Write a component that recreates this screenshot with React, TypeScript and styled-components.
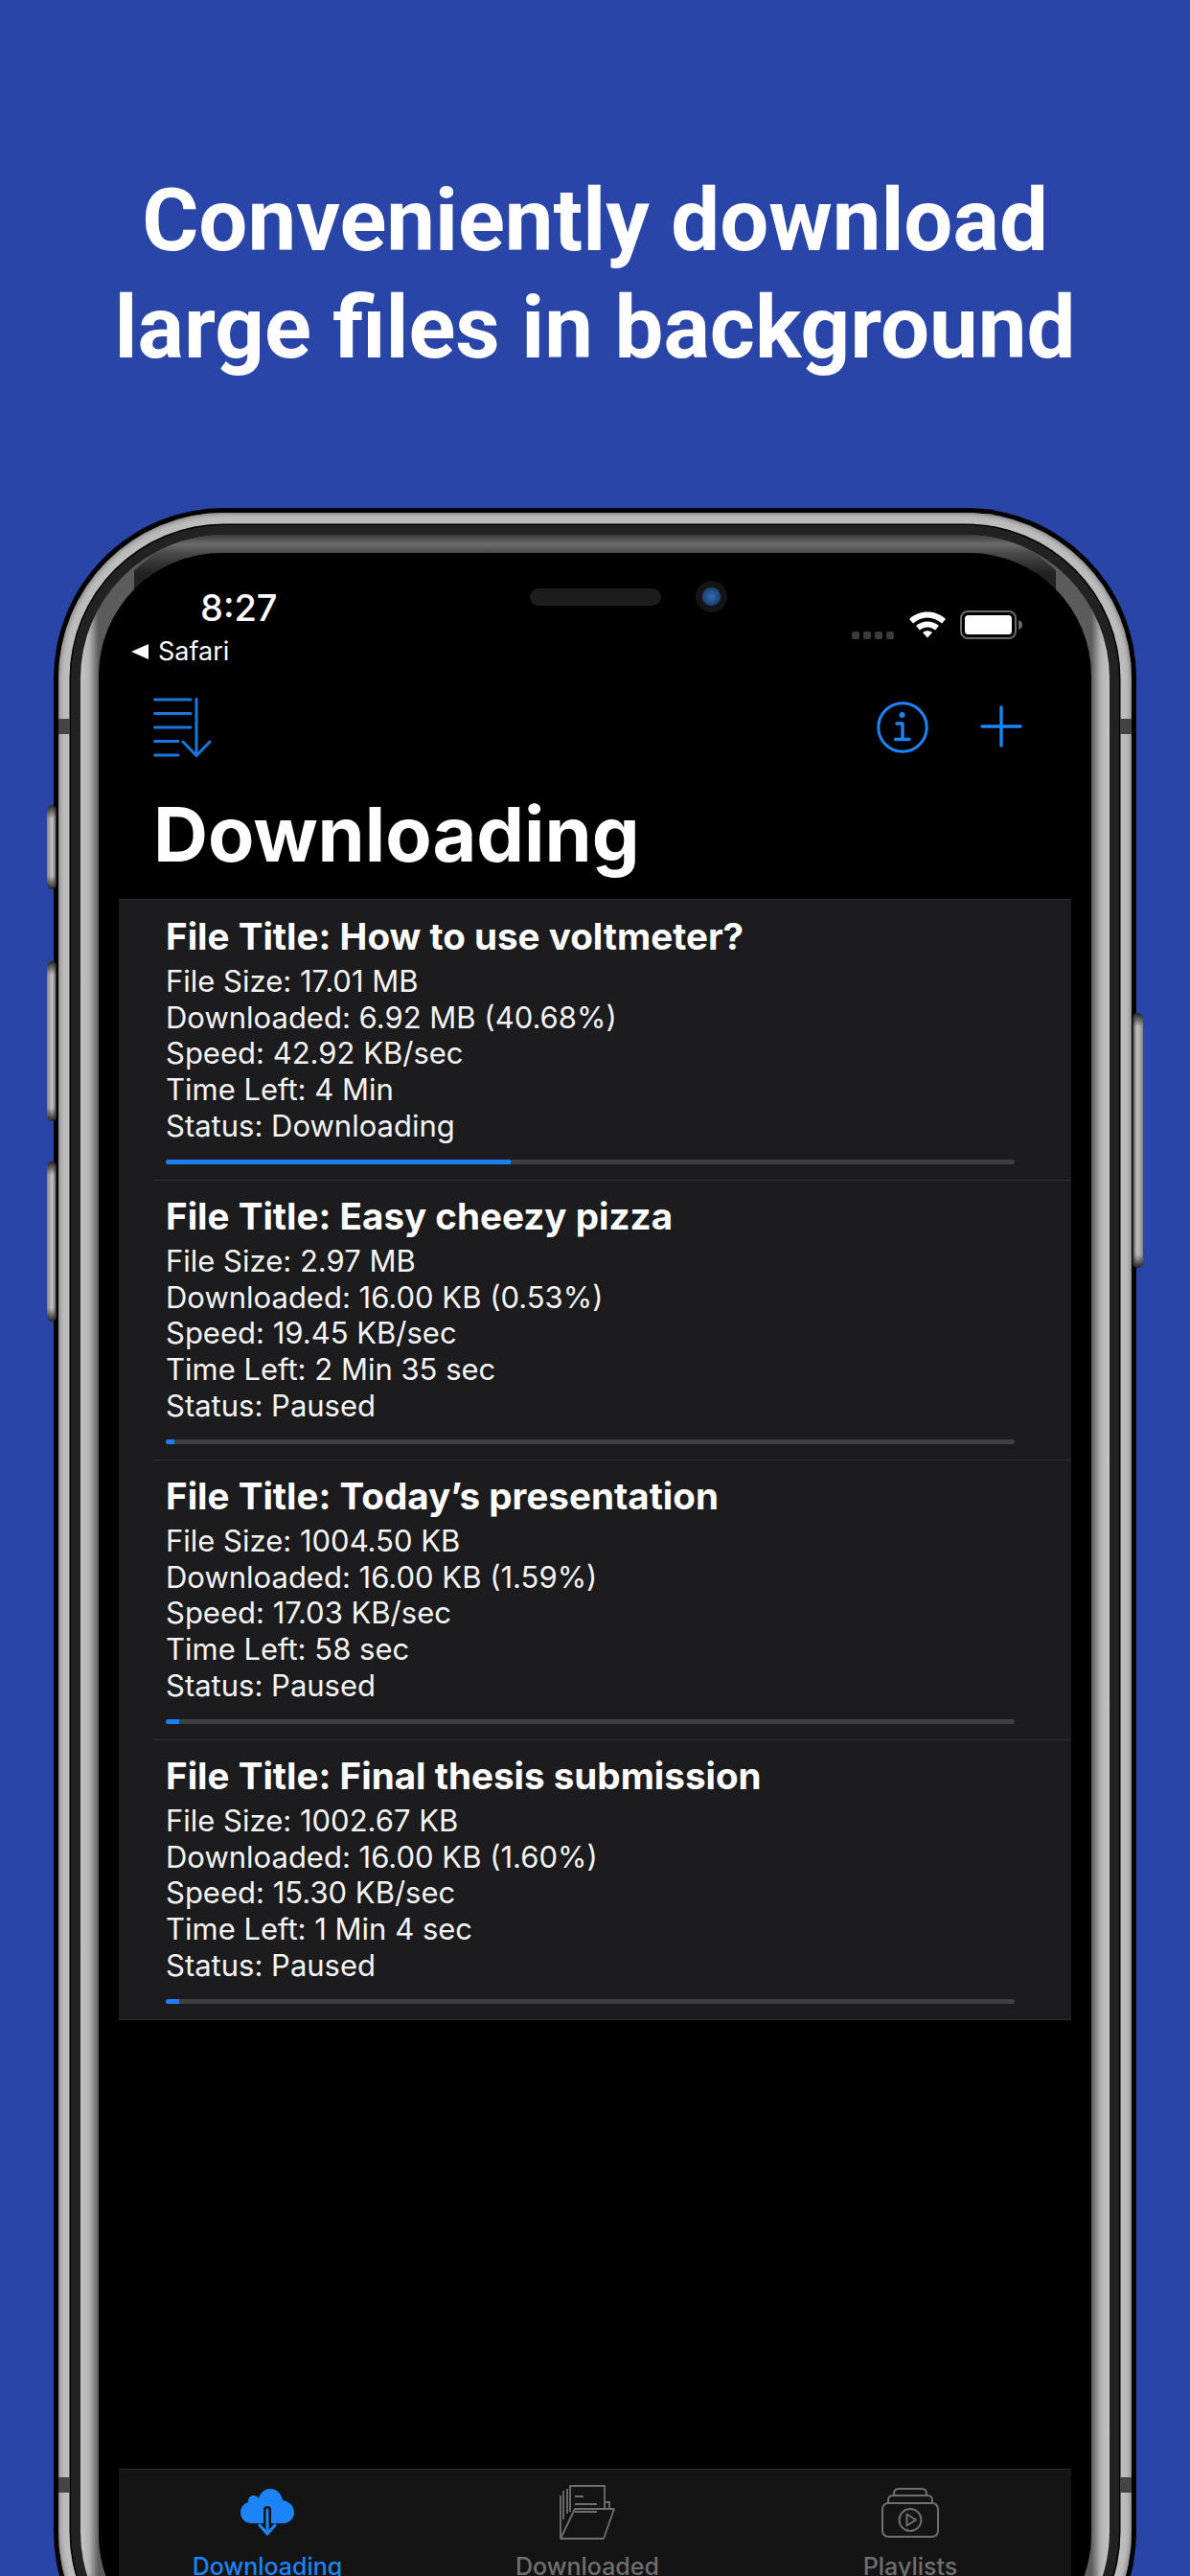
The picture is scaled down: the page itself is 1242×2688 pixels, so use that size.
import React from "react"
import styled, { createGlobalStyle } from "styled-components"

const GlobalStyle = createGlobalStyle`
  html, body {
    margin: 0;
    padding: 0;
    background: #2a45a8;
  }
  * {
    box-sizing: border-box;
  }
`

const Page = styled.div`
  width: 1242px;
  height: 2688px;
  overflow: hidden;
  background: #2a45a8;
  display: flex;
  flex-direction: column;
  align-items: center;
`

const Headline = styled.h1`
  flex: none;
  margin: 0;
  padding-top: 174px;
  height: 530px;
  color: #fff;
  font-family: "Roboto", "Liberation Sans", sans-serif;
  font-size: 90.5px;
  font-weight: 700;
  line-height: 112px;
  text-align: center;
`

const Phone = styled.div`
  position: relative;
  flex: none;
  width: 1130px;
  height: 2290px;
  padding: 5px;
  border-radius: 178px;
  background: #000;
`

const SideButton = styled.div<{ $side: "left" | "right"; $top: number; $height: number; $width: number }>`
  position: absolute;
  ${p => p.$side}: -7px;
  top: ${p => p.$top}px;
  width: ${p => p.$width}px;
  height: ${p => p.$height}px;
  border-radius: 5px;
  background:
    linear-gradient(180deg, #222 0, rgba(34, 34, 34, 0) 14px, rgba(34, 34, 34, 0) calc(100% - 14px), #222 100%),
    linear-gradient(
      ${p => (p.$side === "left" ? "90deg" : "270deg")},
      #888,
      #c4c4c4 55%,
      #777 85%,
      #111
    );
`

const Antenna = styled.div<{ $side: "left" | "right"; $top: number }>`
  position: absolute;
  ${p => p.$side}: 5px;
  top: ${p => p.$top}px;
  width: 12px;
  height: 16px;
  background: #444;
`

const SilverRing = styled.div`
  height: 100%;
  padding: 13px;
  border-radius: 173px;
  background: #bcbcbc;
  box-shadow: inset 0 0 5px 1px #777;
`

const DarkRing = styled.div`
  height: 100%;
  padding: 10px;
  border-radius: 160px;
  background: #222;
  box-shadow: 0 0 0 1.5px #000;
`

const Bevel = styled.div`
  position: relative;
  height: 100%;
  padding: 19px;
  border-radius: 150px;
  overflow: hidden;
  background: linear-gradient(
    90deg,
    #c4c4c4 0,
    #b4b4b4 9px,
    #5c5c5c 19px,
    #5c5c5c calc(100% - 19px),
    #b4b4b4 calc(100% - 9px),
    #c4c4c4 100%
  );

  &::before {
    content: "";
    position: absolute;
    top: 0;
    left: 0;
    right: 0;
    height: 60px;
    background: linear-gradient(180deg, #3c3c3c, #6c6c6c 10px, #4a4a4a 19px, #222 40px);
    clip-path: polygon(
      79px 0,
      calc(100% - 79px) 0,
      calc(100% - 79px) 18px,
      calc(100% - 56px) 37px,
      calc(100% - 56px) 60px,
      56px 60px,
      56px 37px,
      79px 18px
    );
  }
`

const Screen = styled.div`
  position: relative;
  height: 100%;
  padding: 0 21px;
  border-radius: 128px;
  background: #000;
  overflow: hidden;
  display: flex;
  flex-direction: column;
  font-family: "Inter", "Liberation Sans", sans-serif;
  color: #fff;
`

const StatusBar = styled.div`
  flex: none;
  height: 130px;
  padding: 36px 50px 0 13px;
  display: flex;
  justify-content: space-between;
`

const StatusLeft = styled.div`
  display: flex;
  flex-direction: column;
  gap: 10px;
`

const Clock = styled.div`
  padding-left: 72px;
  font-size: 38px;
  line-height: 42px;
  font-weight: 500;
`

const BackLink = styled.div`
  display: flex;
  align-items: center;
  gap: 10px;
  font-size: 27px;
  line-height: 30px;
`

const BackArrow = styled.span`
  width: 0;
  height: 0;
  border-top: 8px solid transparent;
  border-bottom: 8px solid transparent;
  border-right: 18px solid #fff;
`

const StatusIcons = styled.div`
  display: flex;
  align-items: flex-end;
  height: 54px;
  padding-top: 25px;
`

const SignalDots = styled.div`
  display: flex;
  gap: 4px;
  margin-right: 15px;
`

const SignalDot = styled.span`
  width: 8px;
  height: 8px;
  border-radius: 2px;
  background: #3b3b3b;
`

const Notch = styled.div`
  position: absolute;
  top: 29px;
  left: 0;
  right: 0;
  display: flex;
  justify-content: center;
  align-items: center;
  gap: 36px;
  padding-left: 70px;
`

const Speaker = styled.div`
  width: 137px;
  height: 18px;
  border-radius: 9px;
  background: #1c1c1c;
`

const Camera = styled.div`
  width: 33px;
  height: 33px;
  border-radius: 50%;
  background: radial-gradient(circle, #2f6cb0 0, #1d4478 38%, #141414 44%, #141414 100%);
`

const NavBar = styled.div`
  flex: none;
  height: 100px;
  padding: 21px 51px 0 36px;
  display: flex;
  justify-content: space-between;
`

const NavActions = styled.div`
  display: flex;
  gap: 54px;
  padding-top: 4px;
`

const LargeTitle = styled.h2`
  flex: none;
  margin: 0;
  height: 131px;
  padding: 15px 0 0 36px;
  font-size: 79px;
  line-height: 96px;
  font-weight: 700;
`

const List = styled.div`
  flex: none;
  background: #1c1c1e;
  border-top: 1px solid #2c2c2e;
  border-bottom: 1px solid #2c2c2e;
`

const Row = styled.div`
  height: 292px;
  padding: 15px 0 0 49px;
  position: relative;

  & + &::before {
    content: "";
    position: absolute;
    top: 0;
    left: 36px;
    right: 0;
    height: 1px;
    background: #2f2f31;
  }
`

const RowTitle = styled.div`
  font-size: 38.6px;
  line-height: 46px;
  font-weight: 700;
  margin-bottom: 5px;
`

const RowLine = styled.div`
  font-size: 31px;
  line-height: 37.7px;
  font-weight: 400;
  color: #f4f4f4;
`

const Track = styled.div`
  width: 886px;
  height: 5px;
  margin-top: 16px;
  border-radius: 3px;
  background: #3f3f41;
  overflow: hidden;
`

const Fill = styled.div`
  height: 100%;
  background: #1c7ef2;
`

const Spacer = styled.div`
  flex: 1;
`

const TabBar = styled.div`
  flex: none;
  height: 197px;
  background: #141414;
  border-top: 1px solid #2c2c2c;
  display: grid;
  grid-template-columns: 310px 358px 316px;
`

const Tab = styled.div<{ $active?: boolean }>`
  padding-top: 16px;
  display: flex;
  flex-direction: column;
  align-items: center;
  color: ${p => (p.$active ? "#1a84f8" : "#6f6f6f")};
`

const TabIcon = styled.div`
  height: 58px;
  display: flex;
  align-items: center;
`

const TabLabel = styled.div`
  margin-top: 12px;
  font-size: 25px;
  line-height: 30px;
  font-weight: 500;
`

function WifiIcon() {
  return (
    <svg width="40" height="30" viewBox="0 0 40 30" style={{ marginRight: 14, marginBottom: 1 }}>
      <path d="M1 10 C11 0 29 0 39 10 L35 14.5 C26 6.5 14 6.5 5 14.5 Z" fill="#fff" />
      <path d="M8 17 C15 11 25 11 32 17 L28 21.5 C23 17.5 17 17.5 12 21.5 Z" fill="#fff" />
      <path d="M15 24 C18 21.5 22 21.5 25 24 L20 29.5 Z" fill="#fff" />
    </svg>
  )
}

function BatteryIcon() {
  return (
    <svg width="66" height="30" viewBox="0 0 66 30">
      <rect x="1" y="1" width="57" height="28" rx="7" fill="none" stroke="#6b6b6b" strokeWidth="2" />
      <rect x="5" y="5" width="49" height="20" rx="3.5" fill="#fff" />
      <path d="M61 10 C64 11 65 13 65 15 C65 17 64 19 61 20 Z" fill="#6b6b6b" />
    </svg>
  )
}

function QueueIcon() {
  return (
    <svg width="62" height="62" viewBox="0 0 62 62" fill="none" stroke="#1a78dc" strokeWidth="3" strokeLinecap="round">
      <path d="M1.5 2H39M1.5 16.5H39M1.5 31H39M1.5 45.5H26M1.5 60H26" />
      <path d="M45 1.5V60.5M31 46L45 60.5L59 46" strokeLinejoin="round" />
    </svg>
  )
}

function InfoIcon() {
  return (
    <svg width="54" height="54" viewBox="0 0 54 54" fill="none" stroke="#1a84f8" strokeWidth="3">
      <circle cx="27" cy="27" r="25.2" />
      <circle cx="26.5" cy="14" r="3" fill="#1a84f8" stroke="none" />
      <path d="M21 23H27V38M19.5 39.5H34" strokeLinecap="round" strokeLinejoin="round" strokeWidth="3.4" />
    </svg>
  )
}

function PlusIcon() {
  return (
    <svg width="44" height="44" viewBox="0 0 44 44" stroke="#1a84f8" strokeWidth="3.4" strokeLinecap="round" style={{ marginTop: 4 }}>
      <path d="M22 2V42M2 22H42" />
    </svg>
  )
}

function CloudIcon() {
  return (
    <svg width="56" height="50" viewBox="0 0 56 50">
      <path
        d="M12 36 C4 36 0 30 0 25 C0 19 4 15 8 14 C8 8 11 7 14 7 C16 7 18 8 19 10 C21 3 26 0 31 0 C38 0 43 5 44 12 C51 13 56 18 56 25 C56 31 51 36 45 36 Z"
        fill="currentColor"
      />
      <path d="M28 40V22" stroke="#141414" strokeWidth="8" strokeLinecap="round" />
      <path d="M28 43V22" stroke="currentColor" strokeWidth="3" strokeLinecap="round" />
      <path d="M20 38L28 47L36 38" fill="none" stroke="currentColor" strokeWidth="3.2" strokeLinecap="round" strokeLinejoin="round" />
    </svg>
  )
}

function FolderIcon() {
  return (
    <svg width="60" height="58" viewBox="0 0 60 58" fill="none" stroke="currentColor" strokeWidth="1.8">
      <path d="M12 28V1H48V24" />
      <path d="M9 4V30M5 6V36M2 11V55" />
      <path d="M17 12H26M17 20H40M17 28H40" strokeWidth="2" />
      <path d="M48 18H53V25" />
      <path d="M2 56H47L58 25H17L2 56Z" strokeLinejoin="round" />
    </svg>
  )
}

function PlaylistIcon() {
  return (
    <svg width="60" height="52" viewBox="0 0 60 52" fill="none" stroke="currentColor" strokeWidth="2">
      <path d="M13 8V6C13 3 15 1 18 1H42C45 1 47 3 47 6V8" />
      <path d="M7 16V13C7 10 9 8 12 8H48C51 8 53 10 53 13V16" />
      <rect x="1" y="16" width="58" height="35" rx="6" />
      <circle cx="30" cy="33.5" r="11.5" />
      <path d="M26.5 27.5L36 33.5L26.5 39.5Z" strokeLinejoin="round" />
    </svg>
  )
}

type Download = {
  title: string
  size: string
  downloaded: string
  speed: string
  timeLeft: string
  status: string
  progress: number
}

const downloads: Download[] = [
  {
    title: "How to use voltmeter?",
    size: "17.01 MB",
    downloaded: "6.92 MB (40.68%)",
    speed: "42.92 KB/sec",
    timeLeft: "4 Min",
    status: "Downloading",
    progress: 40.68,
  },
  {
    title: "Easy cheezy pizza",
    size: "2.97 MB",
    downloaded: "16.00 KB (0.53%)",
    speed: "19.45 KB/sec",
    timeLeft: "2 Min 35 sec",
    status: "Paused",
    progress: 1,
  },
  {
    title: "Today’s presentation",
    size: "1004.50 KB",
    downloaded: "16.00 KB (1.59%)",
    speed: "17.03 KB/sec",
    timeLeft: "58 sec",
    status: "Paused",
    progress: 1.6,
  },
  {
    title: "Final thesis submission",
    size: "1002.67 KB",
    downloaded: "16.00 KB (1.60%)",
    speed: "15.30 KB/sec",
    timeLeft: "1 Min 4 sec",
    status: "Paused",
    progress: 1.6,
  },
]

export default function App() {
  return (
    <Page>
      <GlobalStyle />
      <Headline>
        Conveniently download
        <br />
        large files in background
      </Headline>
      <Phone>
        <SideButton $side="left" $top={310} $height={88} $width={10} />
        <SideButton $side="left" $top={473} $height={167} $width={10} />
        <SideButton $side="left" $top={682} $height={167} $width={10} />
        <SideButton $side="right" $top={527} $height={266} $width={11} />
        <SilverRing>
          <DarkRing>
            <Bevel>
              <Screen>
                <Notch>
                  <Speaker />
                  <Camera />
                </Notch>
                <StatusBar>
                  <StatusLeft>
                    <Clock>8:27</Clock>
                    <BackLink>
                      <BackArrow />
                      Safari
                    </BackLink>
                  </StatusLeft>
                  <StatusIcons>
                    <SignalDots>
                      <SignalDot />
                      <SignalDot />
                      <SignalDot />
                      <SignalDot />
                    </SignalDots>
                    <WifiIcon />
                    <BatteryIcon />
                  </StatusIcons>
                </StatusBar>
                <NavBar>
                  <QueueIcon />
                  <NavActions>
                    <InfoIcon />
                    <PlusIcon />
                  </NavActions>
                </NavBar>
                <LargeTitle>Downloading</LargeTitle>
                <List>
                  {downloads.map(d => (
                    <Row key={d.title}>
                      <RowTitle>File Title: {d.title}</RowTitle>
                      <RowLine>File Size: {d.size}</RowLine>
                      <RowLine>Downloaded: {d.downloaded}</RowLine>
                      <RowLine>Speed: {d.speed}</RowLine>
                      <RowLine>Time Left: {d.timeLeft}</RowLine>
                      <RowLine>Status: {d.status}</RowLine>
                      <Track>
                        <Fill style={{ width: `${d.progress}%` }} />
                      </Track>
                    </Row>
                  ))}
                </List>
                <Spacer />
                <TabBar>
                  <Tab $active>
                    <TabIcon>
                      <CloudIcon />
                    </TabIcon>
                    <TabLabel>Downloading</TabLabel>
                  </Tab>
                  <Tab>
                    <TabIcon>
                      <FolderIcon />
                    </TabIcon>
                    <TabLabel>Downloaded</TabLabel>
                  </Tab>
                  <Tab>
                    <TabIcon>
                      <PlaylistIcon />
                    </TabIcon>
                    <TabLabel>Playlists</TabLabel>
                  </Tab>
                </TabBar>
              </Screen>
            </Bevel>
          </DarkRing>
        </SilverRing>
        <Antenna $side="left" $top={220} />
        <Antenna $side="right" $top={220} />
        <Antenna $side="left" $top={2055} />
        <Antenna $side="right" $top={2055} />
      </Phone>
    </Page>
  )
}
